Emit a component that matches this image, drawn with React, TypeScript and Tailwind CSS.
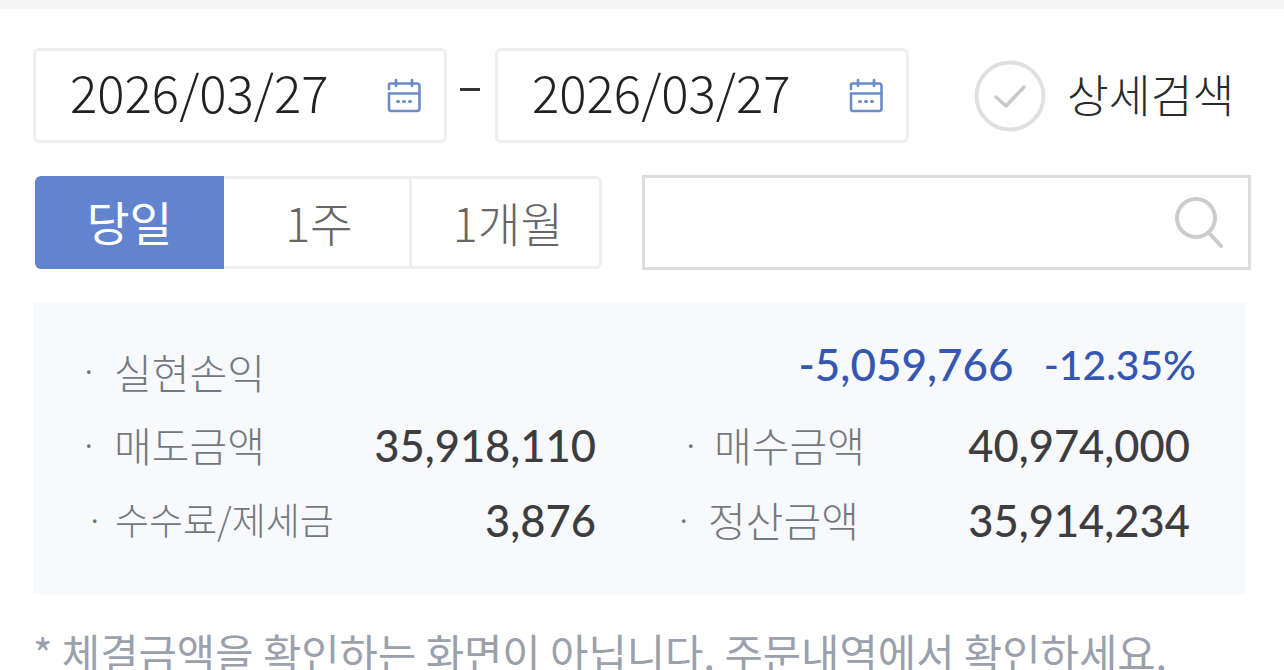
import React from "react";

const KR = { fontFamily: '"Noto Sans CJK KR", sans-serif' };

function CalendarIcon() {
  return (
    <svg width="36" height="36" viewBox="0 0 36 36" fill="none" stroke="#6b8cc7" strokeWidth="2.6" strokeLinecap="round" strokeLinejoin="round">
      <path d="M3 11V6.5C3 6 3.5 5.5 4 5.5H31C32.5 5.5 33.5 6.5 33.5 8V30.5C33.5 32 32.5 33 31 33H5C3.5 33 3 32 3 30.5V16" />
      <path d="M3 15.5H33.5" />
      <path d="M10 2V8M26 2V8" />
      <path d="M11.5 23.5H12.5M17.5 23.5H18.5M23.5 23.5H24.5" strokeWidth="3" />
    </svg>
  );
}

function DateBox() {
  return (
    <div className="flex h-[95px] w-[414px] items-center justify-between rounded-md border-[3px] border-[#eeeeee] bg-white pl-[34px] pr-[22px]">
      <span className="pb-[8px] text-[51px] leading-none text-[#222222] font-light" style={KR}>2026/03/27</span>
      <CalendarIcon />
    </div>
  );
}

function Row({ dotX, labelX, label, value, width, small }: { dotX: number; labelX: number; label: string; value: string; width: number; small?: boolean }) {
  return (
    <div className="relative flex items-center justify-end" style={{ width }}>
      <span className="absolute top-1/2 -translate-y-1/2 text-[28px] text-[#707070]" style={{ left: dotX }}>·</span>
      <span className={`absolute top-1/2 -translate-y-1/2 text-[#747880] font-light whitespace-nowrap ${small ? "text-[37px]" : "text-[41px]"}`} style={{ ...KR, left: labelX }}>{label}</span>
      <span className="pt-[2px] text-[43.5px] leading-none font-medium text-[#3d3d40]" style={{ fontFamily: "Lato, sans-serif" }}>{value}</span>
    </div>
  );
}

export default function App() {
  return (
    <div className="h-[670px] w-[1284px] overflow-hidden bg-white">
      <div className="h-[9px] bg-[#f5f5f5]" />

      <div className="mt-[39px] flex items-center pl-[33px]">
        <DateBox />
        <div className="flex w-[48px] justify-center"><div className="mb-[12px] mr-[3px] h-[3px] w-[20px] bg-[#333333]" /></div>
        <DateBox />
        <svg className="ml-[65px]" width="72" height="72" viewBox="0 0 72 72" fill="none">
          <circle cx="36" cy="36" r="33.5" stroke="#e0e0e0" strokeWidth="4" />
          <path d="M22 37L32 46L50 27" stroke="#c9c9c9" strokeWidth="3.5" strokeLinecap="round" strokeLinejoin="round" />
        </svg>
        <span className="ml-[21px] pb-[4px] text-[45.5px] leading-none font-light text-[#2a2a2a]" style={KR}>상세검색</span>
      </div>

      <div className="mt-[32px] flex items-center pl-[35px]">
        <div className="flex h-[93px] w-[567px] text-[46.5px] font-light text-[#666666]" style={KR}>
          <div className="flex w-[189px] items-center justify-center rounded-l-md bg-[#6284cf] pb-[4px] font-normal text-white">당일</div>
          <div className="flex flex-1 rounded-r-md border-y-[3px] border-r-[3px] border-[#eeeeee]">
            <div className="flex w-[188px] items-center justify-center border-r-[3px] border-[#eeeeee] pb-[2px] pl-[5px]">1주</div>
            <div className="flex flex-1 items-center justify-center pb-[2px] pl-[5px]">1개월</div>
          </div>
        </div>
        <div className="ml-[40px] flex h-[95px] w-[609px] items-center justify-end border-[3px] border-[#dddddd] bg-white pr-[20px]">
          <svg width="56" height="56" viewBox="0 0 56 56" fill="none" stroke="#cccccc" strokeWidth="4" strokeLinecap="round">
            <circle cx="24" cy="23" r="19" />
            <path d="M37 38L49 51" />
          </svg>
        </div>
      </div>

      <div className="ml-[33px] mt-[33px] h-[291px] w-[1213px] bg-[#f8f9fc]">
        <div className="relative flex h-[83px] items-end justify-end pr-[50px]">
          <span className="absolute left-[52px] top-[47px] text-[28px] text-[#707070]">·</span>
          <span className="absolute left-[81px] top-[38px] text-[41px] font-light text-[#747880]" style={KR}>실현손익</span>
          <span className="text-[44px] leading-none font-medium text-[#3457b2]" style={{ fontFamily: "Lato, sans-serif" }}>-5,059,766</span>
          <span className="ml-[30px] text-[40.8px] leading-none font-medium text-[#3457b2]" style={{ fontFamily: "Lato, sans-serif" }}>-12.35%</span>
        </div>
        <div className="mt-[33px] flex h-[52px]">
          <Row dotX={52} labelX={81} label="매도금액" value="35,918,110" width={563} />
          <div className="w-[31px]" />
          <Row dotX={60} labelX={87} label="매수금액" value="40,974,000" width={563} />
        </div>
        <div className="mt-[23px] flex h-[52px]">
          <Row dotX={58} labelX={82} label="수수료/제세금" value="3,876" width={563} small />
          <div className="w-[31px]" />
          <Row dotX={53} labelX={81} label="정산금액" value="35,914,234" width={563} />
        </div>
      </div>

      <p className="ml-[33px] mt-[38px] whitespace-nowrap text-[41.7px] leading-none font-normal text-[#9aa0ac]" style={KR}>* 체결금액을 확인하는 화면이 아닙니다. 주문내역에서 확인하세요.</p>
    </div>
  );
}
